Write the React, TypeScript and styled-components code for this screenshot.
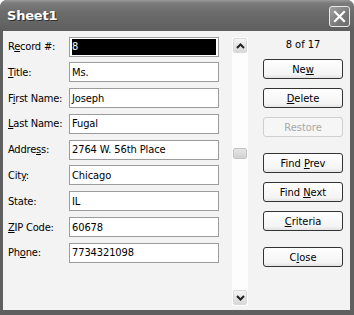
import React from 'react';
import styled, { createGlobalStyle } from 'styled-components';

const GlobalStyle = createGlobalStyle`
  html, body {
    margin: 0;
    padding: 0;
    background: #ffffff;
  }
  body {
    font-family: "DejaVu Sans Condensed", "DejaVu Sans", sans-serif;
    font-stretch: condensed;
    font-size: 11px;
    color: #000;
  }
`;

const fields = [
  { pre: 'R', key: 'e', post: 'cord #:', value: '8', selected: true },
  { pre: '', key: 'T', post: 'itle:', value: 'Ms.' },
  { pre: 'F', key: 'i', post: 'rst Name:', value: 'Joseph' },
  { pre: '', key: 'L', post: 'ast Name:', value: 'Fugal' },
  { pre: 'Addre', key: 's', post: 's:', value: '2764 W. 56th Place' },
  { pre: 'Cit', key: 'y', post: ':', value: 'Chicago' },
  { pre: 'State:', key: '', post: '', value: 'IL' },
  { pre: '', key: 'Z', post: 'IP Code:', value: '60678' },
  { pre: 'Ph', key: 'o', post: 'ne:', value: '7734321098' },
];

const buttons = [
  { pre: 'Ne', key: 'w', post: '', gap: false },
  { pre: '', key: 'D', post: 'elete', gap: false },
  { pre: '', key: 'R', post: 'estore', gap: false, disabled: true },
  { pre: 'Find ', key: 'P', post: 'rev', gap: true },
  { pre: 'Find ', key: 'N', post: 'ext', gap: false },
  { pre: '', key: 'C', post: 'riteria', gap: false },
  { pre: 'C', key: 'l', post: 'ose', gap: true },
];

export default function App() {
  return (
    <>
      <GlobalStyle />
      <Window>
        <TitleBar>
          <TitleText>Sheet1</TitleText>
          <CloseButton>
            <svg width="13" height="13" viewBox="0 0 13 13">
              <path d="M2 2 L11 11 M11 2 L2 11" stroke="#fff" strokeWidth="2.2" strokeLinecap="square" />
            </svg>
          </CloseButton>
        </TitleBar>
        <Body>
          <FormColumn>
            {fields.map((f) => (
              <FieldRow key={f.pre + f.key + f.post}>
                <Label>
                  {f.pre}
                  {f.key && <u>{f.key}</u>}
                  {f.post}
                </Label>
                <Input>
                  {f.selected ? <Selection>{f.value}</Selection> : f.value}
                </Input>
              </FieldRow>
            ))}
          </FormColumn>
          <ScrollBar>
            <ArrowButton>
              <svg width="9" height="6" viewBox="0 0 9 6">
                <path d="M1 5 L4.5 1.5 L8 5" fill="none" stroke="#222" strokeWidth="2" />
              </svg>
            </ArrowButton>
            <Track>
              <Thumb />
            </Track>
            <ArrowButton>
              <svg width="9" height="6" viewBox="0 0 9 6">
                <path d="M1 1 L4.5 4.5 L8 1" fill="none" stroke="#222" strokeWidth="2" />
              </svg>
            </ArrowButton>
          </ScrollBar>
          <ButtonColumn>
            <Counter>8 of 17</Counter>
            <ButtonList>
              {buttons.map((b) => (
                <Button key={b.pre + b.key + b.post} $gap={b.gap} $disabled={!!b.disabled}>
                  <span>
                    {b.pre}
                    <u>{b.key}</u>
                    {b.post}
                  </span>
                </Button>
              ))}
            </ButtonList>
          </ButtonColumn>
        </Body>
      </Window>
    </>
  );
}

const Window = styled.div`
  width: 354px;
  height: 315px;
  box-sizing: border-box;
  background: #5f5f5f;
  border-radius: 7px 7px 0 0;
  padding: 0 4px 5px 3px;
  display: flex;
  flex-direction: column;
`;

const TitleBar = styled.div`
  height: 31px;
  margin: 0 -4px 0 -3px;
  padding: 0 4px 0 7px;
  border-radius: 7px 7px 0 0;
  background: linear-gradient(#9a9a9a 0px, #7c7c7c 3px, #6c6c6c 12px, #646464 24px, #5e5e5e 31px);
  display: flex;
  align-items: center;
  justify-content: space-between;
`;

const TitleText = styled.span`
  font-family: "DejaVu Sans", sans-serif;
  font-stretch: normal;
  font-weight: bold;
  font-size: 13px;
  color: #fff;
  text-shadow: 1px 1px 0 #2c2c2c;
  letter-spacing: -0.2px;
`;

const CloseButton = styled.div`
  width: 19px;
  height: 19px;
  margin-top: 1px;
  border: 1px solid #e8e8e8;
  border-radius: 3px;
  background: linear-gradient(135deg, #a0a0a0, #7a7a7a 60%, #6a6a6a);
  display: flex;
  align-items: center;
  justify-content: center;
`;

const Body = styled.div`
  flex: 1;
  background: #f3f3f3;
  display: flex;
  padding: 5px 7px 4px 5px;
`;

const FormColumn = styled.div`
  width: 211px;
  display: flex;
  flex-direction: column;
  gap: 5.8px;
  padding-top: 0.5px;
`;

const FieldRow = styled.div`
  display: flex;
  align-items: center;
  height: 20px;
`;

const Label = styled.span`
  width: 61px;
  white-space: nowrap;
  letter-spacing: -0.2px;
`;

const Input = styled.div`
  width: 150px;
  height: 20px;
  box-sizing: border-box;
  border: 1px solid #9c9c9c;
  background: #fff;
  padding: 1px 2px;
  display: flex;
  align-items: center;
  white-space: nowrap;
  letter-spacing: -0.1px;
`;

const Selection = styled.span`
  flex: 1;
  align-self: stretch;
  background: #000;
  color: #fff;
  display: flex;
  align-items: center;
`;

const ScrollBar = styled.div`
  width: 16px;
  margin: 1px 15px 0 13px;
  background: #fdfdfd;
  display: flex;
  flex-direction: column;
  align-items: center;
  padding: 1px 0;
  box-sizing: border-box;
`;

const ArrowButton = styled.div`
  width: 14px;
  height: 15px;
  box-sizing: border-box;
  border: 1px solid #dadada;
  border-radius: 2px;
  background: linear-gradient(#f4f4f4, #d8d8d8);
  display: flex;
  align-items: center;
  justify-content: center;
`;

const Track = styled.div`
  flex: 1;
  width: 100%;
  padding-top: 95px;
  display: flex;
  justify-content: center;
`;

const Thumb = styled.div`
  width: 14px;
  height: 11px;
  box-sizing: border-box;
  border: 1px solid #c4c4c4;
  border-radius: 2px;
  background: linear-gradient(#e6e6e6, #d2d2d2);
`;

const ButtonColumn = styled.div`
  width: 80px;
  display: flex;
  flex-direction: column;
`;

const Counter = styled.div`
  height: 18px;
  margin-top: 0px;
  margin-bottom: 5px;
  text-align: center;
  line-height: 18px;
`;

const ButtonList = styled.div`
  display: flex;
  flex-direction: column;
  gap: 9px;
`;

const Button = styled.div<{ $gap: boolean; $disabled: boolean }>`
  height: 20px;
  box-sizing: border-box;
  margin-top: ${(p) => (p.$gap ? '7px' : '0')};
  border: 1px solid ${(p) => (p.$disabled ? '#cfcfcf' : '#333333')};
  border-radius: 3px;
  background: ${(p) => (p.$disabled ? '#f6f6f6' : 'linear-gradient(#ffffff, #f4f4f4 80%, #e4e4e4)')};
  color: ${(p) => (p.$disabled ? '#a8a8a8' : '#000')};
  display: flex;
  align-items: center;
  justify-content: center;
  white-space: pre;
  & u {
    text-decoration: ${(p) => (p.$disabled ? 'none' : 'underline')};
  }
`;
